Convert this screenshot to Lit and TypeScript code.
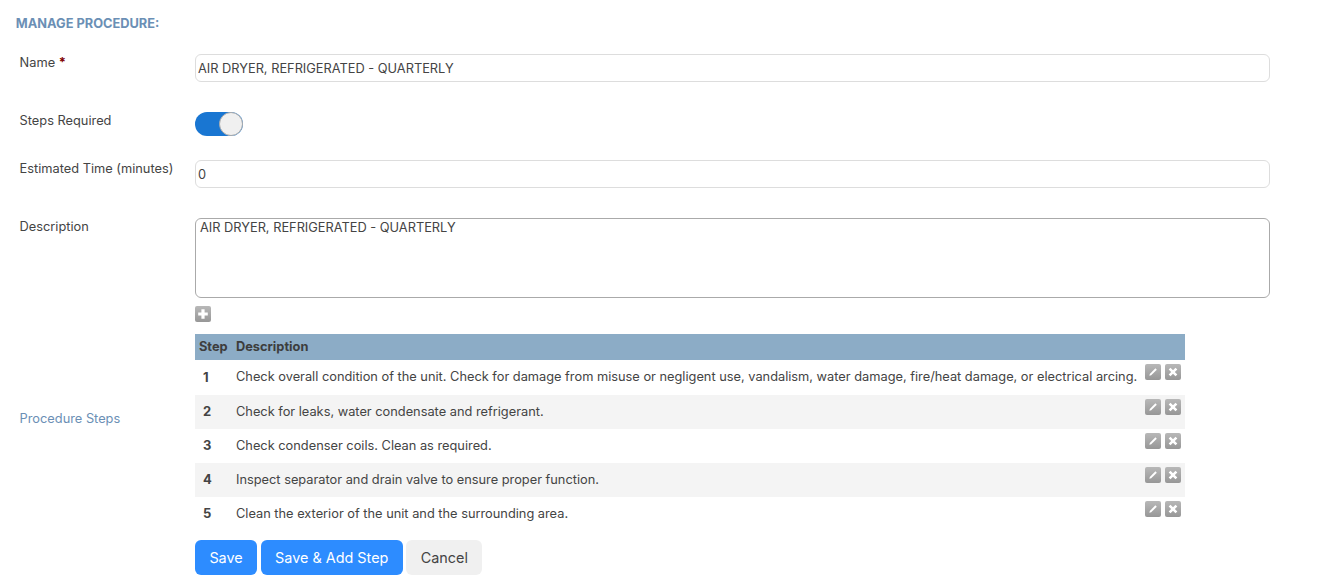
import { LitElement, html, css, svg } from "lit";
import { customElement } from "lit/decorators.js";

const STEPS = [
  "Check overall condition of the unit. Check for damage from misuse or negligent use, vandalism, water damage, fire/heat damage, or electrical arcing.",
  "Check for leaks, water condensate and refrigerant.",
  "Check condenser coils. Clean as required.",
  "Inspect separator and drain valve to ensure proper function.",
  "Clean the exterior of the unit and the surrounding area.",
];

const pencil = svg`<path d="M4.4 11.8l.4-1.9 5.6-5.6 1.4 1.4-5.6 5.6z" fill="#fff"/>`;
const cross = svg`<path d="M4.6 4.6l6.8 6.8M11.4 4.6l-6.8 6.8" stroke="#fff" stroke-width="2.6" fill="none"/>`;
const plus = svg`<path d="M8 3.2v9.6M3.2 8h9.6" stroke="#fff" stroke-width="3.2" fill="none"/>`;

@customElement("app-root")
export class AppRoot extends LitElement {
  static styles = css`
    :host {
      display: block;
      font-family: Inter, "Liberation Sans", sans-serif;
      font-size: 12.8px;
      color: #444;
      background: #fff;
      height: 586px;
      overflow: hidden;
    }
    .heading {
      margin: 0;
      padding: 16px 0 0 15.8px;
      height: 54px;
      box-sizing: border-box;
      font-size: 12.8px;
      line-height: 15px;
      font-weight: 700;
      color: #6b8fb5;
    }
    .row {
      display: grid;
      grid-template-columns: 175.4px 1075px;
      padding-left: 19.6px;
    }
    .label {
      line-height: 16px;
      padding-top: 1px;
    }
    .star {
      color: #800000;
      font-weight: 700;
    }
    .name { height: 58px; }
    .steps-required { height: 48px; }
    .time { height: 58px; }
    .desc { height: 88px; }
    input, textarea {
      font: inherit;
      color: inherit;
      width: 100%;
      box-sizing: border-box;
      margin: 0;
      outline: none;
      background: #fff;
    }
    input {
      height: 28px;
      border: 1px solid #ddd;
      border-radius: 6px;
      padding: 0 2px;
    }
    textarea {
      height: 80px;
      border: 1px solid #aaa;
      border-radius: 6px;
      padding: 1px 4px;
      resize: none;
      display: block;
      line-height: 15px;
    }
    .toggle {
      width: 48px;
      height: 24px;
      border-radius: 12px;
      background: #1976d2;
      position: relative;
    }
    .knob {
      position: absolute;
      right: 0;
      top: 0;
      width: 24px;
      height: 24px;
      box-sizing: border-box;
      border-radius: 50%;
      background: #f0f0f0;
      border: 1px solid #aaa;
    }
    .icon {
      width: 16px;
      height: 16px;
      display: block;
      border-radius: 2px;
      background: linear-gradient(#b8b8b8, #979797);
    }
    .add-row {
      padding: 0 0 12px 195px;
      height: 28px;
      box-sizing: border-box;
    }
    .proc {
      display: grid;
      grid-template-columns: 175.4px 990px;
      padding-left: 19.6px;
      align-items: center;
    }
    .proc-label {
      color: #6b8fb5;
      padding-bottom: 28px;
    }
    table {
      border-collapse: collapse;
      width: 990px;
      table-layout: fixed;
    }
    col.c-num { width: 37px; }
    col.c-acts { width: 40px; }
    th {
      background: #8cacc6;
      height: 26px;
      box-sizing: border-box;
      padding: 0 0 2px 4px;
      text-align: left;
      font-weight: 700;
      color: #3d3d3d;
    }
    td {
      padding: 0 0 2px;
      height: 34px;
      box-sizing: border-box;
      vertical-align: middle;
    }
    tr.first td { height: 35px; }
    td.num {
      font-weight: 700;
      padding-left: 8px;
      font-size: 13px;
    }
    td.text {
      padding-left: 4px;
      white-space: nowrap;
    }
    td.acts {
      vertical-align: top;
      padding-top: 4px;
    }
    tr.alt td { background: #f4f4f4; }
    .acts-wrap {
      display: flex;
      gap: 4px;
    }
    .actions {
      display: flex;
      gap: 3.6px;
      padding: 9px 0 0 195px;
    }
    .actions button {
      height: 35px;
      padding: 0 14.4px;
      border: none;
      border-radius: 6px;
      font: inherit;
      font-size: 14.4px;
      background: #2d8cff;
      color: #fff;
    }
    .actions button.cancel {
      background: #f0f0f0;
      color: #444;
    }
  `;

  render() {
    return html`
      <h1 class="heading">MANAGE PROCEDURE:</h1>
      <div class="row name">
        <div class="label">Name <span class="star">*</span></div>
        <input value="AIR DRYER, REFRIGERATED - QUARTERLY" />
      </div>
      <div class="row steps-required">
        <div class="label">Steps Required</div>
        <div class="toggle"><div class="knob"></div></div>
      </div>
      <div class="row time">
        <div class="label">Estimated Time (minutes)</div>
        <input value="0" />
      </div>
      <div class="row desc">
        <div class="label">Description</div>
        <textarea>AIR DRYER, REFRIGERATED - QUARTERLY</textarea>
      </div>
      <div class="add-row">
        <svg class="icon" viewBox="0 0 16 16">${plus}</svg>
      </div>
      <div class="proc">
        <div class="proc-label">Procedure Steps</div>
        <table>
          <colgroup>
            <col class="c-num" />
            <col />
            <col class="c-acts" />
          </colgroup>
          <thead>
            <tr><th>Step</th><th colspan="2">Description</th></tr>
          </thead>
          <tbody>
            ${STEPS.map(
              (s, i) => html`
                <tr class="${i === 0 ? "first" : ""} ${i % 2 ? "alt" : ""}">
                  <td class="num">${i + 1}</td>
                  <td class="text">${s}</td>
                  <td class="acts">
                    <div class="acts-wrap">
                      <svg class="icon" viewBox="0 0 16 16">${pencil}</svg>
                      <svg class="icon" viewBox="0 0 16 16">${cross}</svg>
                    </div>
                  </td>
                </tr>
              `
            )}
          </tbody>
        </table>
      </div>
      <div class="actions">
        <button>Save</button>
        <button>Save &amp; Add Step</button>
        <button class="cancel">Cancel</button>
      </div>
    `;
  }
}
